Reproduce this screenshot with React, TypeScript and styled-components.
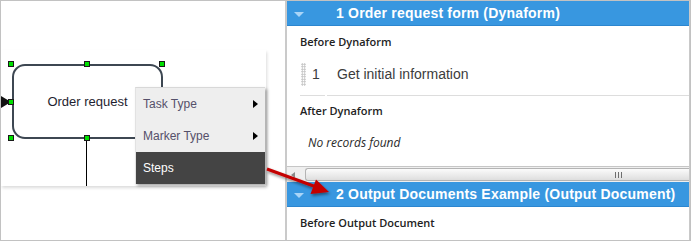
import React from "react";
import styled, { createGlobalStyle, css } from "styled-components";

const GlobalStyle = createGlobalStyle`
  html, body { margin: 0; padding: 0; background: #ffffff; }
  body { font-family: "Liberation Sans", Arial, sans-serif; }
`;

const Frame = styled.div`
  position: relative;
  width: 691px;
  height: 241px;
  box-sizing: border-box;
  border: 1px solid #c2c2c2;
  display: grid;
  grid-template-columns: 284px 2px 1fr;
  overflow: hidden;
  background: #fff;
`;

const DiagramPane = styled.div`
  padding-top: 49px;
`;

const Divider = styled.div`
  background: #cacaca;
`;

const Snapshot = styled.div`
  position: relative;
  width: 265px;
  height: 136px;
  background: #fff;
  box-shadow: 1px 2px 3px rgba(0, 0, 0, 0.14);
`;

const TaskNode = styled.div`
  position: absolute;
  left: 11px;
  top: 14px;
  width: 151px;
  height: 75px;
  box-sizing: border-box;
  border: 2px solid #3d4752;
  border-radius: 13px;
  display: flex;
  align-items: center;
  justify-content: center;
  font-size: 13px;
  color: #1e1e30;
`;

const Handle = styled.div<{ $x: number; $y: number }>`
  position: absolute;
  left: ${(p) => p.$x - 3}px;
  top: ${(p) => p.$y - 3}px;
  width: 6px;
  height: 6px;
  box-sizing: border-box;
  background: #00e000;
  border: 1px solid #1a1a1a;
`;

const EntryMarker = styled.div`
  position: absolute;
  left: 0;
  top: 46px;
  width: 0;
  height: 0;
  border-left: 10px solid #111;
  border-top: 6px solid transparent;
  border-bottom: 6px solid transparent;
`;

const Connector = styled.div`
  position: absolute;
  left: 85px;
  top: 91px;
  width: 1px;
  height: 45px;
  background: #000;
`;

const ContextMenu = styled.div`
  position: absolute;
  left: 134px;
  top: 37px;
  width: 129px;
  background: #eeeeee;
  border-top: 1px solid #d8d8d8;
  border-left: 1px solid #e2e2e2;
  box-shadow: 2px 2px 3px rgba(0, 0, 0, 0.35);
`;

const MenuItem = styled.div<{ $active?: boolean }>`
  height: 32px;
  display: flex;
  align-items: center;
  justify-content: space-between;
  padding-left: 7px;
  font-size: 12px;
  color: #55506a;
  ${(p) =>
    p.$active &&
    css`
      background: #444444;
      color: #ffffff;
    `}
`;

const SubArrow = styled.span`
  width: 0;
  height: 0;
  margin-right: 7px;
  border-left: 5px solid #000;
  border-top: 4px solid transparent;
  border-bottom: 4px solid transparent;
`;

const StepsPane = styled.div`
  display: flex;
  flex-direction: column;
  border-right: 1px solid #c9c9c9;
  min-width: 0;
`;

const SectionHeader = styled.div`
  height: 25px;
  box-sizing: border-box;
  flex-shrink: 0;
  background: #3897e0;
  border-bottom: 1px solid #2c86cf;
  display: flex;
  align-items: center;
  padding-left: 7px;
  white-space: nowrap;
`;

const Caret = styled.span`
  width: 0;
  height: 0;
  margin-top: 3px;
  border-top: 5px solid #a9d5f7;
  border-left: 5px solid transparent;
  border-right: 5px solid transparent;
`;

const HeaderTitle = styled.span`
  margin-left: 32px;
  font-size: 14px;
  font-weight: bold;
  color: #ffffff;
  letter-spacing: 0.2px;
`;

const SubLabel = styled.div<{ $h: number }>`
  height: ${(p) => p.$h}px;
  line-height: ${(p) => p.$h}px;
  padding-left: 13px;
  font-family: "Open Sans", "Noto Sans", sans-serif;
  font-size: 11px;
  font-weight: 600;
  color: #222;
  flex-shrink: 0;
`;

const StepRow = styled.div`
  display: grid;
  grid-template-columns: 25px 1fr;
  column-gap: 2px;
  margin-left: 13px;
  height: 38px;
  flex-shrink: 0;
`;

const StepCell = styled.div`
  display: flex;
  align-items: flex-start;
  padding-top: 5px;
  border-bottom: 1px solid #dddddd;
  font-size: 14px;
  color: #3c3c3c;
`;

const Grip = styled.span`
  width: 5px;
  height: 23px;
  margin-left: 1px;
  background-image: radial-gradient(circle, #c4c4c4 0.9px, transparent 1px);
  background-size: 2.5px 2.5px;
`;

const StepNumber = styled.span`
  margin-left: 6px;
  line-height: 22px;
`;

const StepTitle = styled.span`
  padding-left: 10px;
  line-height: 22px;
`;

const EmptyNote = styled.div`
  height: 40px;
  line-height: 34px;
  padding-left: 21px;
  font-family: "Open Sans", "Noto Sans", sans-serif;
  font-size: 12px;
  font-style: italic;
  color: #2a2a2a;
  flex-shrink: 0;
`;

const HScrollbar = styled.div`
  height: 16px;
  box-sizing: border-box;
  flex-shrink: 0;
  display: flex;
  background: #efefef;
  border-top: 1px solid #c6c6c6;
`;

const ScrollButton = styled.div`
  width: 18px;
  display: flex;
  align-items: center;
  padding-left: 4px;
  box-sizing: border-box;
  &::before {
    content: "";
    width: 0;
    height: 0;
    border-right: 4px solid #8a8a8a;
    border-top: 3.5px solid transparent;
    border-bottom: 3.5px solid transparent;
  }
`;

const ScrollThumb = styled.div`
  flex: 1;
  margin: 1px 0 1px 0;
  box-sizing: border-box;
  border: 1px solid #b4b4b4;
  border-right: none;
  border-radius: 3px 0 0 3px;
  background: linear-gradient(#fbfbfb, #dedede);
  display: flex;
  align-items: center;
  padding-left: 309px;
`;

const ThumbGrip = styled.span`
  width: 7px;
  height: 6px;
  background: repeating-linear-gradient(to right, #6e6e6e 0 1px, transparent 1px 3px);
`;

const Overlay = styled.svg`
  position: absolute;
  left: -1px;
  top: -1px;
  width: 691px;
  height: 241px;
  pointer-events: none;
`;

const handles: Array<[number, number]> = [
  [10, 14],
  [86, 14],
  [161, 14],
  [10, 52],
  [10, 88],
  [86, 88],
];

export default function App() {
  return (
    <>
      <GlobalStyle />
      <Frame>
        <DiagramPane>
          <Snapshot>
            <TaskNode>Order request</TaskNode>
            <EntryMarker />
            <Connector />
            {handles.map(([x, y], i) => (
              <Handle key={i} $x={x} $y={y} />
            ))}
            <ContextMenu>
              <MenuItem>
                Task Type
                <SubArrow />
              </MenuItem>
              <MenuItem>
                Marker Type
                <SubArrow />
              </MenuItem>
              <MenuItem $active>Steps</MenuItem>
            </ContextMenu>
          </Snapshot>
        </DiagramPane>
        <Divider />
        <StepsPane>
          <SectionHeader>
            <Caret />
            <HeaderTitle>1 Order request form (Dynaform)</HeaderTitle>
          </SectionHeader>
          <SubLabel $h={32}>Before Dynaform</SubLabel>
          <StepRow>
            <StepCell>
              <Grip />
              <StepNumber>1</StepNumber>
            </StepCell>
            <StepCell>
              <StepTitle>Get initial information</StepTitle>
            </StepCell>
          </StepRow>
          <SubLabel $h={30}>After Dynaform</SubLabel>
          <EmptyNote>No records found</EmptyNote>
          <HScrollbar>
            <ScrollButton />
            <ScrollThumb>
              <ThumbGrip />
            </ScrollThumb>
          </HScrollbar>
          <SectionHeader>
            <Caret />
            <HeaderTitle>2 Output Documents Example (Output Document)</HeaderTitle>
          </SectionHeader>
          <SubLabel $h={32}>Before Output Document</SubLabel>
        </StepsPane>
        <Overlay viewBox="0 0 691 241">
          <defs>
            <filter id="arrowShadow" x="-20%" y="-50%" width="140%" height="200%">
              <feDropShadow dx="1" dy="2" stdDeviation="1.5" floodColor="#000" floodOpacity="0.45" />
            </filter>
          </defs>
          <g filter="url(#arrowShadow)">
            <line x1="267" y1="169" x2="315" y2="186.5" stroke="#c40000" strokeWidth="3" />
            <polygon points="329,192 310.5,194 316,179.5" fill="#c40000" />
          </g>
        </Overlay>
      </Frame>
    </>
  );
}
